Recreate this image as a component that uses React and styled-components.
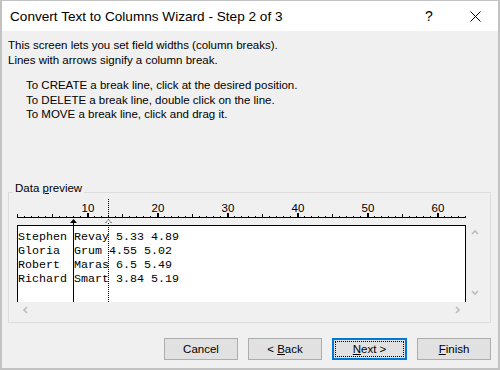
import React from "react";
import styled, { createGlobalStyle } from "styled-components";

const GlobalStyle = createGlobalStyle`
  html, body {
    margin: 0;
    padding: 0;
    background: #f0f0f0;
    overflow: hidden;
  }
  * {
    box-sizing: border-box;
  }
`;

const CHAR = 7;

const Window = styled.div`
  width: 500px;
  height: 370px;
  border: 2px solid #c2c2c2;
  border-top-width: 1px;
  background: #f0f0f0;
  display: flex;
  flex-direction: column;
  font-family: "Liberation Sans", Arial, sans-serif;
  font-size: 11.5px;
  color: #000;
`;

const TitleBar = styled.div`
  height: 30px;
  background: #fff;
  display: flex;
  align-items: center;
  padding-left: 8px;
`;

const Title = styled.div`
  flex: 1;
  font-size: 13.6px;
`;

const CaptionButton = styled.div`
  width: 46px;
  height: 30px;
  display: flex;
  align-items: center;
  justify-content: center;
  font-size: 14px;
`;

const Body = styled.div`
  flex: 1;
  display: flex;
  flex-direction: column;
  padding: 7px 7px 8px 6px;
`;

const Intro = styled.div`
  line-height: 15px;
`;

const Steps = styled.div`
  margin-top: 10px;
  padding-left: 18px;
  line-height: 14.5px;
`;

const Group = styled.div`
  margin-top: 70px;
  width: 483px;
  border: 1px solid #dcdcdc;
  padding: 0 0 3px 8px;
  display: flex;
  flex-direction: column;
`;

const Legend = styled.div`
  align-self: flex-start;
  margin: -12px 0 0 -4px;
  padding: 0 2px;
  height: 15px;
  line-height: 15px;
  background: #f0f0f0;
`;

const Accel = styled.span`
  text-decoration: underline;
  text-underline-offset: 1px;
`;

const PreviewFrame = styled.div`
  position: relative;
  margin-top: -3px;
  width: 466px;
`;

const RulerSvg = styled.svg`
  display: block;
  width: 450px;
  height: 32px;
`;

const ScrollGrid = styled.div`
  display: grid;
  grid-template-columns: 449px 17px;
  grid-template-rows: 77px 17px;
`;

const DataBox = styled.div`
  background: #fff;
  border: 1px solid #000;
  border-bottom: none;
  padding: 4px 0 0 0;
  font-family: "Liberation Mono", "Courier New", monospace;
  font-size: 11.67px;
  line-height: 14px;
  white-space: pre;
  overflow: hidden;
`;

const VScroll = styled.div`
  display: flex;
  flex-direction: column;
  justify-content: space-between;
`;

const HScroll = styled.div`
  display: flex;
  justify-content: space-between;
`;

const ArrowCell = styled.div`
  width: 17px;
  height: 17px;
  display: flex;
  align-items: center;
  justify-content: center;
`;

const Marker = styled.svg`
  position: absolute;
  left: ${(p) => p.$col * CHAR - 3}px;
  top: ${(p) => p.$top}px;
  width: 7px;
  height: ${(p) => 109 - p.$top}px;
  overflow: visible;
`;

const Footer = styled.div`
  margin-top: auto;
  display: flex;
  justify-content: flex-end;
  gap: 10px;
`;

const Button = styled.div`
  position: relative;
  height: 22px;
  display: flex;
  align-items: center;
  justify-content: center;
  white-space: pre;
  background: #e1e1e1;
  border: ${(p) => (p.$default ? "2px solid #0078d7" : "1px solid #adadad")};
  width: ${(p) => (p.$default ? "75px" : "74px")};

  &::after {
    content: "";
    display: ${(p) => (p.$default ? "block" : "none")};
    position: absolute;
    inset: 1px;
    border: 1px dotted #000;
  }
`;

const Chevron = ({ dir }) => {
  const paths = {
    up: "M1 5 L4 2 L7 5",
    down: "M1 2 L4 5 L7 2",
    left: "M5 1 L2 4 L5 7",
    right: "M2 1 L5 4 L2 7",
  };
  return (
    <svg width="8" height="8" viewBox="0 0 8 8">
      <path d={paths[dir]} fill="none" stroke="#bcbcbc" strokeWidth="1.6" />
    </svg>
  );
};

const Ruler = () => {
  const ticks = [];
  for (let c = 0; c <= 64; c++) {
    const x = c * CHAR + 0.5;
    let h = 1;
    let w = 1;
    if (c % 10 === 0 && c > 0) {
      h = 4;
      w = 2;
    } else if (c % 5 === 0) {
      h = 3;
    }
    ticks.push(
      <rect key={c} x={x - 0.5} y={24 - h} width={w} height={h} fill="#000" />
    );
  }
  const labels = [10, 20, 30, 40, 50, 60];
  return (
    <RulerSvg viewBox="0 0 450 32">
      <rect x="0" y="24" width="449" height="1" fill="#000" />
      {ticks}
      {labels.map((n) => (
        <text
          key={n}
          x={n * CHAR + 1}
          y="19"
          textAnchor="middle"
          fontFamily="Liberation Sans, Arial, sans-serif"
          fontSize="11.5"
          fill="#000"
        >
          {n}
        </text>
      ))}
    </RulerSvg>
  );
};

const SolidBreak = ({ col }) => (
  <Marker $col={col} $top={26}>
    <path d="M0 4 L3.5 0 L7 4 Z" fill="#000" />
    <rect x="3" y="3" width="1" height="80" fill="#000" />
  </Marker>
);

const DottedBreak = ({ col }) => (
  <Marker $col={col} $top={6}>
    <line x1="3.5" y1="0" x2="3.5" y2="19" stroke="#000" strokeDasharray="1 1" />
    <path d="M0.5 24 L3.5 20.5 L6.5 24" fill="none" stroke="#000" strokeDasharray="1 1" />
    <line x1="3.5" y1="24" x2="3.5" y2="103" stroke="#000" strokeDasharray="1 1" />
  </Marker>
);

const rows = [
  "Stephen Revay 5.33 4.89",
  "Gloria  Grum 4.55 5.02",
  "Robert  Maras 6.5 5.49",
  "Richard Smart 3.84 5.19",
];

export default function App() {
  return (
    <>
      <GlobalStyle />
      <Window>
        <TitleBar>
          <Title>Convert Text to Columns Wizard - Step 2 of 3</Title>
          <CaptionButton>?</CaptionButton>
          <CaptionButton>
            <svg width="11" height="11" viewBox="0 0 11 11">
              <path d="M0.5 0.5 L10.5 10.5 M10.5 0.5 L0.5 10.5" stroke="#000" strokeWidth="1" />
            </svg>
          </CaptionButton>
        </TitleBar>
        <Body>
          <Intro>
            <div>This screen lets you set field widths (column breaks).</div>
            <div>Lines with arrows signify a column break.</div>
          </Intro>
          <Steps>
            <div>To CREATE a break line, click at the desired position.</div>
            <div>To DELETE a break line, double click on the line.</div>
            <div>To MOVE a break line, click and drag it.</div>
          </Steps>
          <Group>
            <Legend>
              Data <Accel>p</Accel>review
            </Legend>
            <PreviewFrame>
              <Ruler />
              <ScrollGrid>
                <DataBox>{rows.join("\n")}</DataBox>
                <VScroll>
                  <ArrowCell>
                    <Chevron dir="up" />
                  </ArrowCell>
                  <ArrowCell>
                    <Chevron dir="down" />
                  </ArrowCell>
                </VScroll>
                <HScroll>
                  <ArrowCell>
                    <Chevron dir="left" />
                  </ArrowCell>
                  <ArrowCell>
                    <Chevron dir="right" />
                  </ArrowCell>
                </HScroll>
                <div />
              </ScrollGrid>
              <SolidBreak col={8} />
              <DottedBreak col={13} />
            </PreviewFrame>
          </Group>
          <Footer>
            <Button>Cancel</Button>
            <Button>
              {"< "}
              <Accel>B</Accel>ack
            </Button>
            <Button $default>
              <Accel>N</Accel>
              {"ext >"}
            </Button>
            <Button>
              <Accel>F</Accel>inish
            </Button>
          </Footer>
        </Body>
      </Window>
    </>
  );
}
